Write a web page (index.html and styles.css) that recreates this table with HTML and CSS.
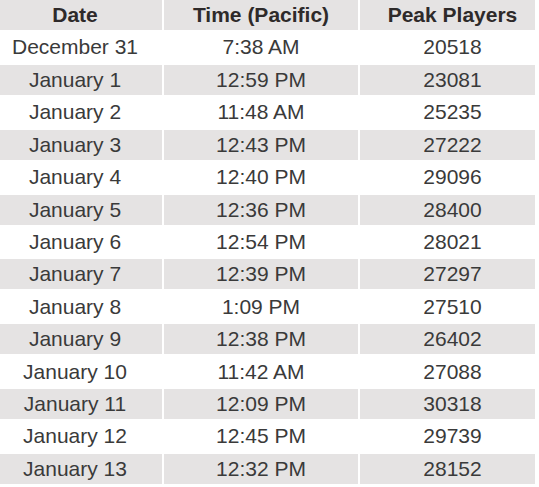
FILE: index.html
```html
<!DOCTYPE html>
<html>
<head>
<meta charset="utf-8">
<link rel="stylesheet" href="styles.css">
</head>
<body>
<div class="table">
  <div class="row head"><div>Date</div><div>Time (Pacific)</div><div>Peak Players</div></div>
  <div class="row"><div>December 31</div><div>7:38 AM</div><div>20518</div></div>
  <div class="row alt"><div>January 1</div><div>12:59 PM</div><div>23081</div></div>
  <div class="row"><div>January 2</div><div>11:48 AM</div><div>25235</div></div>
  <div class="row alt"><div>January 3</div><div>12:43 PM</div><div>27222</div></div>
  <div class="row"><div>January 4</div><div>12:40 PM</div><div>29096</div></div>
  <div class="row alt"><div>January 5</div><div>12:36 PM</div><div>28400</div></div>
  <div class="row"><div>January 6</div><div>12:54 PM</div><div>28021</div></div>
  <div class="row alt"><div>January 7</div><div>12:39 PM</div><div>27297</div></div>
  <div class="row"><div>January 8</div><div>1:09 PM</div><div>27510</div></div>
  <div class="row alt"><div>January 9</div><div>12:38 PM</div><div>26402</div></div>
  <div class="row"><div>January 10</div><div>11:42 AM</div><div>27088</div></div>
  <div class="row alt"><div>January 11</div><div>12:09 PM</div><div>30318</div></div>
  <div class="row"><div>January 12</div><div>12:45 PM</div><div>29739</div></div>
  <div class="row alt"><div>January 13</div><div>12:32 PM</div><div>28152</div></div>
</div>
</body>
</html>
```
FILE: styles.css
```css
html, body {
  margin: 0;
  padding: 0;
  background: #ffffff;
}
.table {
  display: flex;
  flex-direction: column;
  gap: 2.43px;
  font-family: "Liberation Sans", Arial, sans-serif;
  font-size: 21px;
  color: #3a3a3a;
}
.row {
  display: grid;
  grid-template-columns: 162px 194px 175px;
  column-gap: 2px;
  height: 30px;
}
.row > div {
  display: flex;
  align-items: center;
  justify-content: center;
  white-space: nowrap;
}
.row > div:first-child {
  padding-right: 12px;
}
.row > div:last-child {
  padding-left: 10px;
}
.head > div,
.alt > div {
  background: #e5e3e3;
}
.head {
  font-weight: bold;
  color: #2e2a2a;
}
```
